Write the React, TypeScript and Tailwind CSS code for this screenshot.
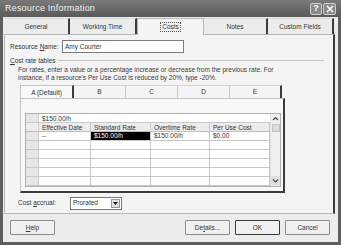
import React from 'react';

const tabs = [
  { label: 'General', w: 'w-[66px]' },
  { label: 'Working Time', w: 'w-[67px]' },
  { label: 'Costs', w: 'w-[67px]', active: true },
  { label: 'Notes', w: 'w-[64px]' },
  { label: 'Custom Fields', w: 'w-[66px]' },
];

const rateTabs = ['A (Default)', 'B', 'C', 'D', 'E'];

const cols = [
  { label: 'Effective Date', w: 'w-[52px]' },
  { label: 'Standard Rate', w: 'w-[60px]' },
  { label: 'Overtime Rate', w: 'w-[59px]' },
  { label: 'Per Use Cost', w: 'w-[60px]' },
];

const rows = [
  ['--', '$150.00/h', '$150.00/h', '$0.00'],
  ['', '', '', ''],
  ['', '', '', ''],
  ['', '', '', ''],
  ['', '', '', ''],
  ['', '', '', ''],
];

function Button({ label, width, bold }: { label: React.ReactNode; width: string; bold?: boolean }) {
  return (
    <div
      className={`${width} h-[15px] flex items-center justify-center bg-[#f0f0f0] border ${bold ? 'border-[#3a3a3a]' : 'border-[#8c8c8c]'} rounded-[1px] text-[6.5px] text-[#333]`}
    >
      {label}
    </div>
  );
}

export default function App() {
  return (
    <div
      className="w-[341px] h-[245px] bg-[#5e5e5e] flex flex-col px-[3px] pb-[3px] overflow-hidden"
      style={{ fontFamily: '"Liberation Sans", Arial, sans-serif' }}
    >
      {/* Title bar */}
      <div className="h-[17px] flex items-center justify-between bg-gradient-to-b from-[#7a7a7a] to-[#5a5a5a] -mx-[3px] px-[5px]">
        <span className="text-[9px] text-[#f2f2f2] tracking-[0.2px]">Resource Information</span>
        <div className="flex gap-[1px]">
          <div className="w-[12px] h-[12px] border border-[#cfcfcf] rounded-[2px] bg-[#8a8a8a] flex items-center justify-center text-[9px] font-bold text-white leading-none">?</div>
          <div className="w-[13px] h-[12px] border border-[#cfcfcf] rounded-[2px] bg-[#8a8a8a] flex items-center justify-center text-white">
            <svg width="8" height="8" viewBox="0 0 8 8">
              <path d="M1 1 L7 7 M7 1 L1 7" stroke="white" strokeWidth="1.6" />
            </svg>
          </div>
        </div>
      </div>

      {/* Body */}
      <div className="flex-1 bg-[#ececec] flex flex-col px-[1px] pt-[1px]">
        {/* Tabs */}
        <div className="flex h-[16px] text-[6.5px] text-[#333]">
          {tabs.map((t) =>
            t.active ? (
              <div key={t.label} className={`${t.w} h-[17px] bg-[#f4f4f4] border-t border-l border-r border-[#b8b8b8] flex items-center justify-center relative z-10`}>
                <span className="border border-dotted border-[#555] px-[1px] leading-[8px]">{t.label}</span>
              </div>
            ) : (
              <div key={t.label} className={`${t.w} h-[16px] bg-[#ececec] border-t border-[#d8d8d8] border-r-2 border-r-[#3c3c3c] flex items-center justify-center`}>
                {t.label}
              </div>
            )
          )}
        </div>

        {/* Panel */}
        <div className="w-[331px] h-[180px] bg-[#f4f4f4] border border-[#b8b8b8] border-r-2 border-r-[#3c3c3c] flex flex-col px-[5px] pt-[5px] text-[6.5px] text-[#333]">
          <div className="flex items-center h-[13px]">
            <span className="w-[52px]">Resource <span className="underline">N</span>ame:</span>
            <div className="w-[122px] h-[13px] bg-white border border-[#7a7a7a] flex items-center px-[2px]">Amy Courter</div>
          </div>

          <div className="flex items-center mt-[4px] h-[7px]">
            <span><span className="underline">C</span>ost rate tables</span>
            <div className="flex-1 h-px bg-[#c4c4c4] ml-[2px] mr-[4px]" />
          </div>

          <div className="pl-[8px] mt-[2px] leading-[8px] text-[#3a3a3a]">
            <div>For rates, enter a value or a percentage increase or decrease from the previous rate. For</div>
            <div>instance, if a resource's Per Use Cost is reduced by 20%, type -20%.</div>
          </div>

          {/* Rate tabs */}
          <div className="ml-[10px] mt-[3px] flex h-[13px]">
            {rateTabs.map((t, i) => (
              <div
                key={t}
                className={`w-[52px] flex items-center justify-center ${i === 0 ? 'bg-[#f8f8f8] border-t border-l border-[#c4c4c4] border-r-2 border-r-[#3c3c3c] w-[54px] h-[14px]' : i === 4 ? 'border-t border-[#d4d4d4] border-r-2 border-r-[#3c3c3c]' : 'border-t border-[#d4d4d4] border-r border-r-[#c8c8c8]'}`}
              >
                {t}
              </div>
            ))}
          </div>

          {/* Rate table panel */}
          <div className="ml-[10px] w-[265px] h-[95px] bg-[#f8f8f8] border border-[#c4c4c4] border-r-2 border-r-[#3c3c3c] border-b-2 border-b-[#3c3c3c] pl-[4px] pt-[14px]">
            <div className="w-[256px] flex border border-[#b0b0b0] bg-white">
              <div className="flex flex-col">
                {/* entry bar */}
                <div className="flex h-[9px] border-b border-[#c8c8c8]">
                  <div className="w-[13px] bg-[#e6e6e6] border-r border-[#c8c8c8]" />
                  <div className="w-[231px] px-[3px] leading-[9px]">$150.00/h</div>
                </div>
                {/* header */}
                <div className="flex h-[9px] bg-[#ececec] border-b border-[#bdbdbd]">
                  <div className="w-[13px] border-r border-[#c8c8c8]" />
                  {cols.map((c) => (
                    <div key={c.label} className={`${c.w} border-r border-[#c8c8c8] px-[3px] leading-[9px] whitespace-nowrap`}>
                      {c.label}
                    </div>
                  ))}
                </div>
                {rows.map((r, ri) => (
                  <div key={ri} className="flex h-[9px] border-b border-[#c8c8c8]">
                    <div className="w-[13px] bg-[#e6e6e6] border-r border-[#c8c8c8]" />
                    {cols.map((c, ci) => (
                      <div
                        key={c.label}
                        className={`${c.w} border-r border-[#c8c8c8] px-[3px] leading-[8px] whitespace-nowrap ${ri === 0 && ci === 1 ? 'bg-black text-white' : ''}`}
                      >
                        {r[ci]}
                      </div>
                    ))}
                  </div>
                ))}
              </div>
              {/* scrollbar */}
              <div className="w-[11px] bg-[#f0f0f0] flex flex-col justify-between items-center border-l border-[#e0e0e0]">
                <div className="flex flex-col items-center">
                  <svg width="7" height="7" viewBox="0 0 7 7" className="mt-[1px]">
                    <path d="M1 5 L3.5 2.5 L6 5" stroke="#444" strokeWidth="1.2" fill="none" />
                  </svg>
                  <div className="w-[8px] h-[8px] mt-[2px] bg-[#dcdcdc] border border-[#c0c0c0]" />
                </div>
                <div className="w-[9px] h-[9px] bg-[#dedede] flex items-center justify-center mb-[1px]">
                  <svg width="7" height="7" viewBox="0 0 7 7">
                    <path d="M1 2.5 L3.5 5 L6 2.5" stroke="#444" strokeWidth="1.2" fill="none" />
                  </svg>
                </div>
              </div>
            </div>
          </div>

          {/* Cost accrual */}
          <div className="flex items-center mt-[3px] h-[14px] pl-[8px]">
            <span className="w-[52px]">Cost <span className="underline">a</span>ccrual:</span>
            <div className="w-[52px] h-[13px] bg-white border border-[#7a7a7a] flex items-center justify-between pl-[2px] pr-[1px]">
              <span>Prorated</span>
              <div className="w-[9px] h-[9px] bg-[#e2e2e2] border border-[#9a9a9a] flex items-center justify-center">
                <svg width="5" height="3" viewBox="0 0 5 3">
                  <path d="M0 0 L5 0 L2.5 3 Z" fill="#111" />
                </svg>
              </div>
            </div>
          </div>
        </div>

        {/* Buttons */}
        <div className="flex items-center mt-[6px] pl-[6px]">
          <Button label={<span><span className="underline">H</span>elp</span>} width="w-[45px]" />
          <div className="flex-1" />
          <div className="flex gap-[5px] pr-[7px]">
            <Button label={<span>De<span className="underline">t</span>ails...</span>} width="w-[45px]" />
            <Button label="OK" width="w-[45px]" bold />
            <Button label="Cancel" width="w-[45px]" />
          </div>
        </div>
      </div>
    </div>
  );
}
